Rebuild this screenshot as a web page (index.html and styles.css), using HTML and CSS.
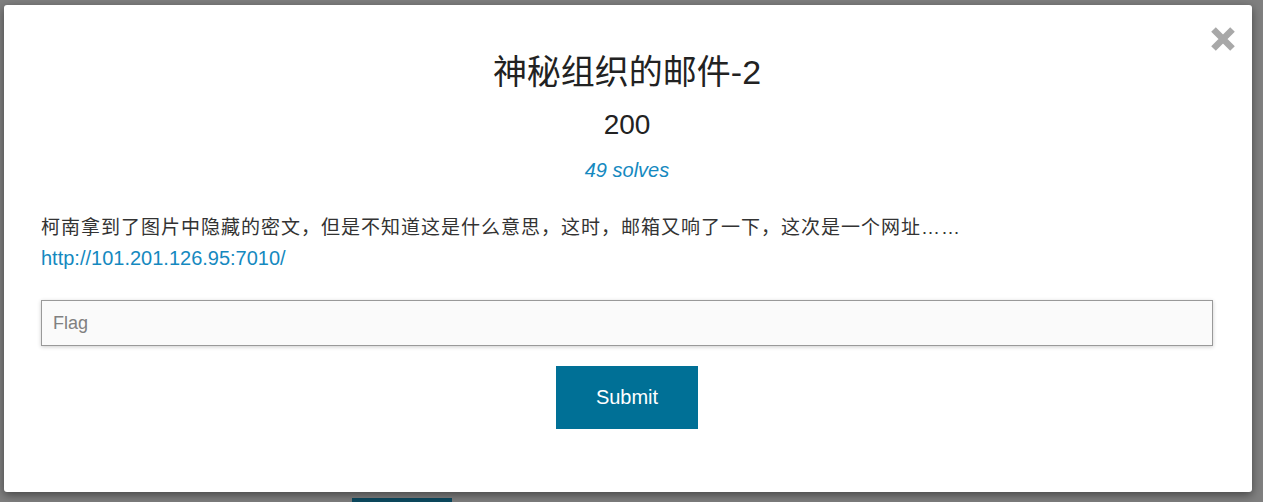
FILE: index.html
```html
<!DOCTYPE html>
<html lang="zh">
<head>
<meta charset="utf-8">
<title>神秘组织的邮件-2</title>
<link rel="stylesheet" href="styles.css">
</head>
<body>
<div class="page-behind">
  <div class="behind-button"></div>
</div>
<div class="modal">
  <div class="close" aria-label="Close">
    <svg width="26" height="26" viewBox="0 0 26 26"><path d="M3.5 3.5 L22.5 22.5 M22.5 3.5 L3.5 22.5" stroke="#a8a8a8" stroke-width="6.5" stroke-linecap="butt"/></svg>
  </div>
  <h2 class="title">神秘组织的邮件-2</h2>
  <h3 class="value">200</h3>
  <div class="solves">49 solves</div>
  <div class="description">
    <p class="cjk-line">柯南拿到了图片中隐藏的密文，但是不知道这是什么意思，这时，邮箱又响了一下，这次是一个网址……</p>
    <p><a class="link" href="#">http://101.201.126.95:7010/</a></p>
  </div>
  <input class="flag-input" type="text" placeholder="Flag" autofocus>
  <div class="actions">
    <button class="submit">Submit</button>
  </div>
</div>
</body>
</html>
```
FILE: styles.css
```css
html, body {
  margin: 0;
  padding: 0;
}
body {
  width: 1263px;
  height: 502px;
  overflow: hidden;
  background: #7f7f7f;
  font-family: "Liberation Sans", "Noto Sans CJK SC", sans-serif;
  color: #333;
  position: relative;
}
.page-behind {
  position: absolute;
  left: 0;
  top: 0;
  width: 1263px;
  height: 502px;
}
.behind-button {
  position: absolute;
  left: 352px;
  top: 498px;
  width: 100px;
  height: 10px;
  background: #0d4a60;
}
.modal {
  position: relative;
  margin: 5px 0 0 4px;
  width: 1248px;
  height: 487px;
  box-sizing: border-box;
  padding: 47px 39px 0 37px;
  background: #fff;
  border-radius: 3px;
  box-shadow: 0 3px 10px rgba(0, 0, 0, 0.45);
}
.close {
  position: absolute;
  right: 16px;
  top: 21px;
  width: 26px;
  height: 26px;
  display: flex;
}
.title {
  margin: 0;
  text-align: center;
  font-weight: normal;
  font-size: 34px;
  line-height: 40px;
  color: #222;
}
.value {
  margin: 16px 0 0;
  text-align: center;
  font-weight: normal;
  font-size: 28px;
  line-height: 34px;
  color: #222;
}
.solves {
  margin-top: 16px;
  text-align: center;
  font-style: italic;
  font-size: 20px;
  line-height: 24px;
  color: #1589bf;
}
.description {
  margin-top: 31px;
  font-size: 19px;
  line-height: 30px;
  color: #333;
}
.description p {
  margin: 0;
}
.cjk-line {
  letter-spacing: 1px;
}
.link {
  color: #1589bf;
  text-decoration: none;
  font-size: 20px;
}
.flag-input {
  display: block;
  margin-top: 26px;
  width: 100%;
  height: 46px;
  box-sizing: border-box;
  padding: 0 11px;
  border: 1px solid #999;
  background: #fafafa;
  box-shadow: 0 1px 4px rgba(0, 0, 0, 0.2);
  font-family: "Liberation Sans", sans-serif;
  font-size: 18px;
  color: #333;
  outline: none;
  caret-color: #333;
}
.flag-input::placeholder {
  color: #808080;
}
.actions {
  display: flex;
  justify-content: center;
  margin-top: 20px;
}
.submit {
  padding: 20px 40px;
  border: 0;
  background: #007096;
  color: #fff;
  font-family: "Liberation Sans", sans-serif;
  font-size: 20px;
  line-height: 23px;
}
```
